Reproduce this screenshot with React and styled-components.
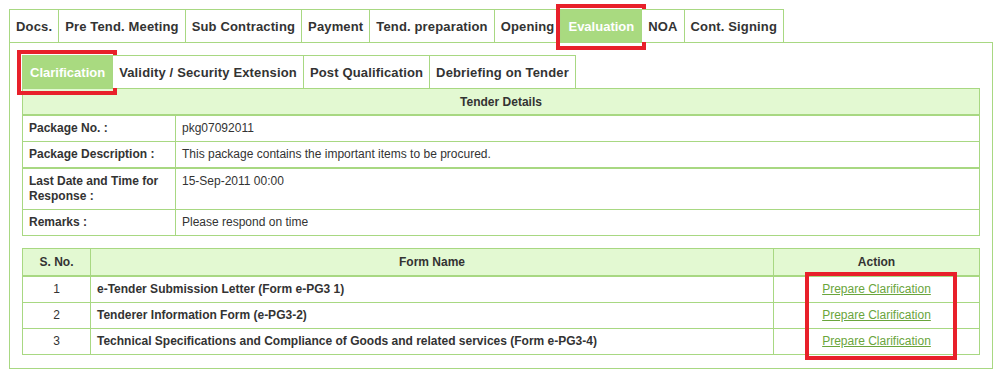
import React from 'react'
import styled, { createGlobalStyle } from 'styled-components'

const GREEN = '#a8d882'
const ACTIVE = '#a9da80'
const HEAD = '#e3f9d2'
const TEXT = '#333333'

const Global = createGlobalStyle`
  html, body { margin: 0; padding: 0; background: #fff; }
  body {
    padding: 9px;
    font-family: "Liberation Sans", Arial, sans-serif;
    font-size: 12px;
    color: ${TEXT};
  }
`

const Page = styled.div`
  width: 984px;
`

const TabRow = styled.ul`
  display: flex;
  list-style: none;
  margin: 0;
  padding: 0;
`

const Tab = styled.li`
  position: relative;
  display: flex;
  align-items: center;
  height: 32px;
  padding: ${p => (p.$active ? '0 7px' : '0 6px')};
  border-top: 1px solid ${GREEN};
  border-right: 1px solid ${GREEN};
  &:first-child { border-left: 1px solid ${GREEN}; }
  font-size: 13px;
  font-weight: bold;
  letter-spacing: ${p => (p.$active ? 0 : 0.15)}px;
  white-space: nowrap;
  background: ${p => (p.$active ? ACTIVE : '#fff')};
  color: ${p => (p.$active ? '#fff' : TEXT)};
`

const Highlight = styled.span`
  position: absolute;
  top: ${p => p.$top ?? -6}px;
  left: ${p => p.$left ?? -5}px;
  right: ${p => p.$right ?? -5}px;
  bottom: ${p => p.$bottom ?? -8}px;
  border: 4px solid #e8202a;
  pointer-events: none;
`

const Panel = styled.div`
  border: 1px solid ${GREEN};
  padding: 12px 12px 13px 12px;
`

const SubTabRow = styled(TabRow)``

const SubTab = styled(Tab)``

const Grid = styled.table`
  width: 958px;
  border-collapse: collapse;
  font-size: 12px;
  color: ${TEXT};
`

const HeadCell = styled.th`
  height: ${p => p.$h || 25}px;
  padding: 0 6px;
  background: ${HEAD};
  border: 1px solid ${GREEN};
  border-bottom: 2px solid ${GREEN};
  font-weight: bold;
  text-align: center;
`

const DetailRow = styled.tr`
  border-bottom: ${p => (p.$thick ? 2 : 1)}px solid ${GREEN};
`

const LabelCell = styled.td`
  width: 140px;
  padding: 5px 6px;
  line-height: 15px;
  border: 1px solid ${GREEN};
  border-bottom-width: inherit;
  font-weight: bold;
  vertical-align: top;
`

const ValueCell = styled(LabelCell)`
  width: auto;
  font-weight: normal;
`

const Cell = styled.td`
  padding: 5px 6px;
  line-height: 15px;
  border: 1px solid ${GREEN};
  font-weight: ${p => (p.$bold ? 'bold' : 'normal')};
  text-align: ${p => p.$align || 'left'};
`

const Spacer = styled.div`
  height: 12px;
`

const FormWrap = styled.div`
  position: relative;
`

const ActionLink = styled.a`
  color: #6aa53c;
  text-decoration: underline;
  cursor: pointer;
`

const mainTabs = ['Docs.', 'Pre Tend. Meeting', 'Sub Contracting', 'Payment', 'Tend. preparation', 'Opening', 'Evaluation', 'NOA', 'Cont. Signing']
const subTabs = ['Clarification', 'Validity / Security Extension', 'Post Qualification', 'Debriefing on Tender']

const details = [
  ['Package No. :', 'pkg07092011'],
  ['Package Description :', 'This package contains the important items to be procured.', true],
  ['Last Date and Time for Response :', '15-Sep-2011 00:00'],
  ['Remarks :', 'Please respond on time'],
]

const forms = [
  'e-Tender Submission Letter (Form e-PG3 1)',
  'Tenderer Information Form (e-PG3-2)',
  'Technical Specifications and Compliance of Goods and related services (Form e-PG3-4)',
]

export default function App() {
  return (
    <>
      <Global />
      <Page>
        <TabRow>
          {mainTabs.map(t => (
            <Tab key={t} $active={t === 'Evaluation'}>
              {t}
              {t === 'Evaluation' && <Highlight />}
            </Tab>
          ))}
        </TabRow>
        <Panel>
          <SubTabRow>
            {subTabs.map(t => (
              <SubTab key={t} $active={t === 'Clarification'}>
                {t}
                {t === 'Clarification' && <Highlight $left={-6} $bottom={-7} />}
              </SubTab>
            ))}
          </SubTabRow>
          <Grid>
            <thead>
              <tr><HeadCell colSpan={2}>Tender Details</HeadCell></tr>
            </thead>
            <tbody>
              {details.map(([k, v, thick]) => (
                <DetailRow key={k} $thick={thick}>
                  <LabelCell>{k}</LabelCell>
                  <ValueCell>{v}</ValueCell>
                </DetailRow>
              ))}
            </tbody>
          </Grid>
          <Spacer />
          <FormWrap>
            <Grid>
              <thead>
                <tr>
                  <HeadCell $h={26} style={{ width: 55 }}>S. No.</HeadCell>
                  <HeadCell $h={26}>Form Name</HeadCell>
                  <HeadCell $h={26} style={{ width: 193 }}>Action</HeadCell>
                </tr>
              </thead>
              <tbody>
                {forms.map((f, i) => (
                  <tr key={f}>
                    <Cell $align="center">{i + 1}</Cell>
                    <Cell $bold>{f}</Cell>
                    <Cell $align="center"><ActionLink>Prepare Clarification</ActionLink></Cell>
                  </tr>
                ))}
              </tbody>
            </Grid>
            <Highlight $top={24} $left={783} $right={23} $bottom={-5} />
          </FormWrap>
        </Panel>
      </Page>
    </>
  )
}
